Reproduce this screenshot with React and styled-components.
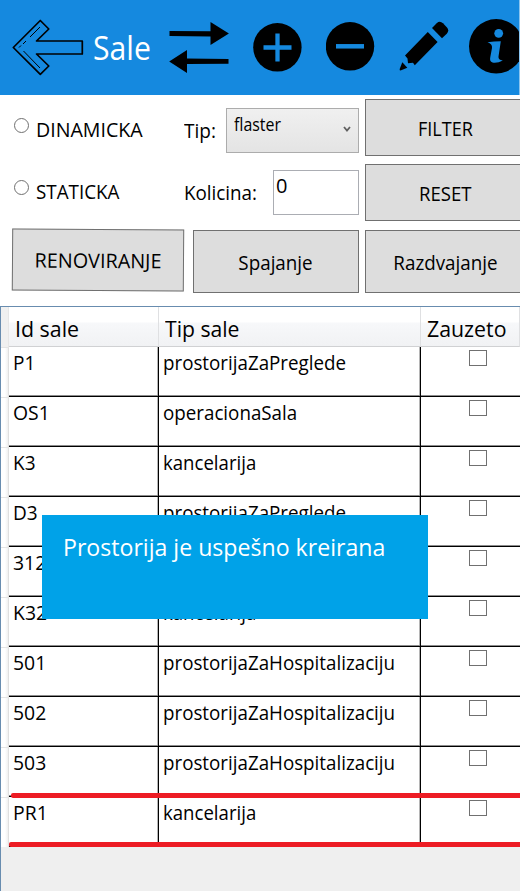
import React from 'react';
import styled, { createGlobalStyle } from 'styled-components';

const GlobalStyle = createGlobalStyle`
  * { box-sizing: border-box; }
  body {
    margin: 0;
    background: #fff;
    color: #000;
    font-family: 'Open Sans', 'Noto Sans', sans-serif;
    overflow: hidden;
  }
`;

const Window = styled.main`
  width: 520px;
  height: 891px;
  display: flex;
  flex-direction: column;
  position: relative;
  overflow: hidden;
`;

const Header = styled.header`
  height: 95px;
  flex: none;
  display: flex;
  align-items: flex-start;
  overflow: hidden;
  background: #1589df;
  border-right: 1px solid #8ac4ef;
`;

const HeaderIcon = styled.svg`
  flex: none;
  display: block;
  margin-left: ${(p) => p.$gap}px;
`;

const Text = styled.span`
  display: inline-block;
  white-space: nowrap;
  font-size: ${(p) => p.$size || 20}px;
  line-height: 28px;
  transform: scaleX(${(p) => p.$fit || 1});
  transform-origin: ${(p) => p.$origin || 'left'} center;
`;

const Title = styled.h1`
  margin: 26px 1px 0 9px;
  width: 66px;
  height: 44px;
  flex: none;
  font-size: 32px;
  line-height: 44px;
  font-weight: 400;
  color: #fff;
  transform: scaleX(0.943);
  transform-origin: left center;
`;

const Filters = styled.section`
  height: 211px;
  flex: none;
  display: flex;
  overflow: hidden;
`;

const Fields = styled.div`
  width: 365px;
  flex: none;
  display: flex;
  flex-direction: column;
  padding: 13px 6px 0 12px;
`;

const FieldRow = styled.div`
  height: 62px;
  flex: none;
  display: flex;
  align-items: flex-start;
`;

const Option = styled.label`
  width: 172px;
  flex: none;
  display: flex;
  align-items: flex-start;
  gap: 7px;
  padding-left: 2px;

  ${Text} { margin-top: 8px; }
`;

const Radio = styled.span`
  width: 15px;
  height: 15px;
  flex: none;
  margin-top: 10px;
  border: 1px solid #707070;
  border-radius: 50%;
  background: #fff;
`;

const Caption = styled.div`
  flex: 1;
  min-width: 0;
  padding-top: 9px;
  height: 40px;
`;

const Select = styled.div`
  width: 133px;
  height: 45px;
  flex: none;
  display: flex;
  justify-content: space-between;
  padding: 1px 7px 0;
  border: 1px solid #acacac;
  background: linear-gradient(#f0f0f0, #e4e4e4);
`;

const Chevron = styled.svg`
  margin-top: 16px;
  flex: none;
`;

const NumberField = styled.div`
  width: 86px;
  height: 45px;
  flex: none;
  padding: 1px 2px;
  border: 1px solid #abadb3;
  background: #fff;
`;

const Button = styled.button`
  width: ${(p) => p.$width}px;
  height: ${(p) => p.$height}px;
  flex: none;
  display: flex;
  justify-content: center;
  align-items: center;
  padding: 2px 0 0;
  border: 1px solid #707070;
  border-radius: 0;
  background: #ddd;
  color: #000;
  font-family: inherit;
  transform: rotate(${(p) => p.$tilt || 0}deg);
`;

const FieldActions = styled.div`
  display: flex;
  align-items: flex-start;
  gap: 9px;
  margin-top: -3px;

  & > :last-child { margin-top: 1px; }
`;

const SideActions = styled.div`
  flex: none;
  display: flex;
  flex-direction: column;
  gap: 8px;
  padding-top: 4px;

  & > :last-child { margin-top: 1px; }
`;

const Table = styled.section`
  flex: 1;
  display: flex;
  flex-direction: column;
  border-top: 1px solid #688caf;
  border-left: 1px solid #688caf;
  background: #efefef;
`;

const columns = '8px 150px 262px 1fr';

const TableHead = styled.div`
  height: 40px;
  flex: none;
  display: grid;
  grid-template-columns: ${columns};
`;

const HeadCell = styled.div`
  padding: 8px 0 0 6px;
  border-right: 1px solid #dfe0e2;
  border-bottom: 1px solid #d0d1d3;
  background: linear-gradient(#fff 0 15px, #f7f8fa 16px, #f1f2f4);
`;

const HeadCorner = styled.div`
  background: #f0f0f0;
  border-right: 1px solid #e6e6e6;
`;

const Row = styled.div`
  height: 50px;
  flex: none;
  display: grid;
  grid-template-columns: ${columns};
`;

const RowHandle = styled.div`
  border-top: 1px solid #e4e4e4;
  background: linear-gradient(90deg, #fff 0 4px, #f0f0f0 7px, #cfcfcf 8px);
`;

const Cell = styled.div`
  padding: 2px 0 0 4px;
  background: #fff;
  border-right: ${(p) => (p.$last ? '0' : '1px solid #000')};
  box-shadow: inset 0 -1px #000, inset 0 -2px #8c8c8c${(p) => (p.$last ? '' : ', inset -1px 0 #b5b5b5')};
  overflow: hidden;
`;

const CheckCell = styled(Cell)`
  padding: 3px 0 0 48px;
`;

const CheckBox = styled.span`
  display: block;
  width: 18px;
  height: 16px;
  border: 1px solid #707070;
  background: #fff;
`;

const Marker = styled.div`
  position: absolute;
  left: ${(p) => p.$left}px;
  right: 0;
  top: ${(p) => p.$top}px;
  height: 5px;
  border-radius: 2px 0 0 2px;
  background: #ed1c24;
`;

const Toast = styled.div`
  position: absolute;
  left: 42px;
  top: 515px;
  width: 386px;
  height: 104px;
  padding: 18px 0 0 21px;
  background: #00a2e8;
  color: #fff;
`;

const rows = [
  ['P1', 'prostorijaZaPreglede'],
  ['OS1', 'operacionaSala'],
  ['K3', 'kancelarija'],
  ['D3', 'prostorijaZaPreglede'],
  ['312', ''],
  ['K32', 'kancelarija'],
  ['501', 'prostorijaZaHospitalizaciju'],
  ['502', 'prostorijaZaHospitalizaciju'],
  ['503', 'prostorijaZaHospitalizaciju'],
  ['PR1', 'kancelarija'],
];

const BackIcon = () => (
  <HeaderIcon $gap={12} width="72" height="95" viewBox="12 0 72 95" fill="none" stroke="#000">
    <path d="M13.3 47.5 40.3 20.5 48.8 29 36.5 41 H82.3 V54 H36.5 L48.8 66 40.3 74.3Z" strokeWidth="1.7" strokeLinejoin="round" />
    <path d="M40 27 30 37M26 41l-3 3M21 45.500l-2 2M23.500 51 40 68" strokeWidth="1" />
  </HeaderIcon>
);

const SwapIcon = () => (
  <HeaderIcon $gap={9} width="60" height="95" viewBox="169 0 60 95">
    <path d="M169.500 31 210.500 31.200V22L228.900 33.500 210.500 45V36.500L169.500 36Z" />
    <path d="M228.500 59 187 58.500V50L169.200 61.500 187 73V64L228.500 63.800Z" />
  </HeaderIcon>
);

const PlusIcon = () => (
  <HeaderIcon $gap={24} width="49" height="95" viewBox="253 0 49 95">
    <circle cx="277.400" cy="47.300" r="24.200" />
    <path d="M263.500 47.500H291.500M277.500 33.500V61.500" stroke="#1589df" strokeWidth="4.300" />
  </HeaderIcon>
);

const MinusIcon = () => (
  <HeaderIcon $gap={24} width="49" height="95" viewBox="326 0 49 95">
    <circle cx="350" cy="46.300" r="24.200" />
    <path d="M336 46.300H364" stroke="#1589df" strokeWidth="4.500" />
  </HeaderIcon>
);

const PencilIcon = () => (
  <HeaderIcon $gap={24} width="50" height="95" viewBox="399 0 50 95">
    <path d="M427.800 32 437.600 42 414.800 65.300 413 62.700 408 63.300 407.500 58.500 405 55.500Z" />
    <path d="M432 28 436.700 23.200Q439.800 20.300 443 23.300L447 27.500Q449.600 30.500 446.800 33.700L442 38.300Z" />
    <path d="M402.300 62.300 407.300 67.800 400.500 70.500Q399.500 70.500 399.700 69Z" />
  </HeaderIcon>
);

const InfoIcon = () => (
  <HeaderIcon $gap={20} width="54" height="95" viewBox="469 0 54 95">
    <circle cx="496.200" cy="46.300" r="27.200" />
    <circle cx="498.700" cy="33.300" r="4.400" fill="#1589df" />
    <path d="M487.500 42.300Q494 41.300 500.800 41.300L498.500 56.500Q498 60 502.800 60.500 497.500 63.300 492.500 62.500 489.300 61.500 490.300 57L492 48Q492.500 44 487.500 42.300Z" fill="#1589df" />
  </HeaderIcon>
);

const idFit = (id) => (id.length > 2 ? 0.97 : 0.95);

export default function App() {
  return (
    <Window>
      <GlobalStyle />
      <Header>
        <BackIcon />
        <Title>Sale</Title>
        <SwapIcon />
        <PlusIcon />
        <MinusIcon />
        <PencilIcon />
        <InfoIcon />
      </Header>

      <Filters>
        <Fields>
          <FieldRow>
            <Option><Radio /><Text $fit={0.98}>DINAMICKA</Text></Option>
            <Caption><Text $fit={0.95}>Tip:</Text></Caption>
            <Select>
              <Text $size={18} $fit={0.885}>flaster</Text>
              <Chevron width="8" height="7" viewBox="0 0 8 7" fill="none" stroke="#606060" strokeWidth="1.800">
                <path d="M1 1 4 4.500 7 1" />
              </Chevron>
            </Select>
          </FieldRow>
          <FieldRow>
            <Option><Radio /><Text $fit={0.94}>STATICKA</Text></Option>
            <Caption><Text $fit={0.94}>Kolicina:</Text></Caption>
            <NumberField><Text>0</Text></NumberField>
          </FieldRow>
          <FieldActions>
            <Button $width={172} $height={62} $tilt={0.4}><Text $fit={0.99} $origin="center">RENOVIRANJE</Text></Button>
            <Button $width={166} $height={63}><Text $fit={0.94} $origin="center">Spajanje</Text></Button>
          </FieldActions>
        </Fields>
        <SideActions>
          <Button $width={160} $height={57}><Text $fit={0.9} $origin="center">FILTER</Text></Button>
          <Button $width={160} $height={57}><Text $fit={0.93} $origin="center">RESET</Text></Button>
          <Button $width={160} $height={63}><Text $fit={0.94} $origin="center">Razdvajanje</Text></Button>
        </SideActions>
      </Filters>

      <Table>
        <TableHead>
          <HeadCorner />
          <HeadCell><Text $size={22.5} $fit={0.95}>Id sale</Text></HeadCell>
          <HeadCell><Text $size={22.5} $fit={0.94}>Tip sale</Text></HeadCell>
          <HeadCell><Text $size={22.5} $fit={0.947}>Zauzeto</Text></HeadCell>
        </TableHead>
        {rows.map(([id, type]) => (
          <Row key={id}>
            <RowHandle />
            <Cell><Text $fit={idFit(id)}>{id}</Text></Cell>
            <Cell>{type && <Text $fit={type === 'kancelarija' ? 0.93 : 0.938}>{type}</Text>}</Cell>
            <CheckCell $last><CheckBox /></CheckCell>
          </Row>
        ))}
      </Table>

      <Marker $left={11} $top={793} />
      <Marker $left={9} $top={842} />
      <Toast><Text $size={24} $fit={0.963}>Prostorija je uspešno kreirana</Text></Toast>
    </Window>
  );
}
